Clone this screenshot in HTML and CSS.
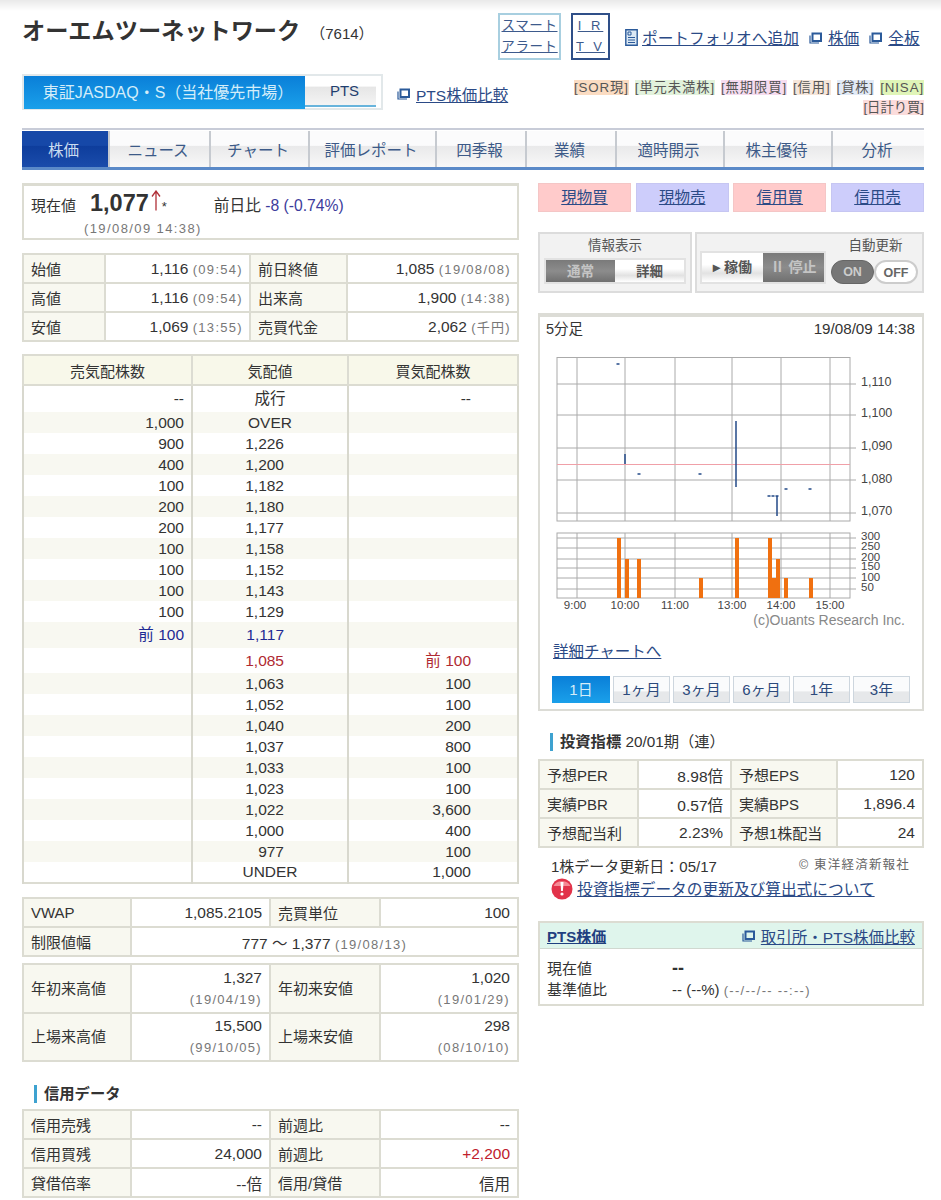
FILE: index.html
```html
<!DOCTYPE html>
<html lang="ja">
<head>
<meta charset="utf-8">
<title>オーエムツーネットワーク (7614)</title>
<link rel="stylesheet" href="styles.css">
</head>
<body>
<svg class="defs" width="0" height="0">
  <symbol id="win" viewBox="0 0 13 12"><path d="M3.500 1.500h8.500v7.500h-8.500z" fill="none" stroke="#2b5a9a" stroke-width="2"/><path d="M1 3.500v7.500h9" fill="none" stroke="#2b5a9a" stroke-width="1.200"/></symbol>
</svg>
<div class="page">
  <header class="head">
    <h1 class="title">オーエムツーネットワーク<span class="code">（7614）</span></h1>
    <div class="head-links">
      <div class="boxlink alert"><a href="#">スマート</a><a href="#">アラート</a></div>
      <div class="boxlink irtv"><a href="#">I R</a><a href="#">T V</a></div>
      <a class="toplink first" href="#"><svg class="docicon" viewBox="0 0 13 17"><path d="M.8.8h11.400v15.400H.8z" fill="#dbe8f4" stroke="#2b5a9a" stroke-width="1.400"/><path d="M3 3h3v3H3zM3 8.500h7M3 11h7M3 13.500h7" fill="none" stroke="#2b5a9a"/></svg><span>ポートフォリオへ追加</span></a>
      <a class="toplink" href="#"><svg class="winicon"><use href="#win"/></svg><span>株価</span></a>
      <a class="toplink" href="#"><svg class="winicon"><use href="#win"/></svg><span>全板</span></a>
    </div>
  </header>

  <div class="market">
    <div class="market-tabs">
      <div class="mtab on">東証JASDAQ・S（当社優先市場）</div>
      <div class="mtab pt">PTS</div>
    </div>
    <a class="ptslink" href="#"><svg class="winicon"><use href="#win"/></svg><span>PTS株価比較</span></a>
    <div class="tags">
      <span class="tag t1">[SOR現]</span><span class="tag t2">[単元未満株]</span><span class="tag t3">[無期限買]</span><span class="tag t4">[信用]</span><span class="tag t5">[貸株]</span><span class="tag t6">[NISA]</span><span class="tag t7">[日計り買]</span>
    </div>
  </div>

  <nav class="nav">
    <a class="on w86">株価</a><a class="w101">ニュース</a><a class="w99">チャート</a><a class="w127">評価レポート</a><a class="w90">四季報</a><a class="w90">業績</a><a class="w108">適時開示</a><a class="w108">株主優待</a><a class="grow">分析</a>
  </nav>

  <main class="cols">
    <section class="left">
      <div class="price">
        <div class="price-line">
          <span class="plabel">現在値</span><b class="pval">1,077</b><svg class="arrow" viewBox="0 0 10 21"><path d="M5 20.500V2M1 6.500L5 1l4 5.500" fill="none" stroke="#b03038" stroke-width="1.300"/></svg><span class="star">*</span>
          <span class="pdiff">前日比 <span class="blue">-8 (-0.74%)</span></span>
        </div>
        <div class="ptime">(19/08/09 14:38)</div>
      </div>

      <table class="tb stats">
        <colgroup><col class="c82"><col class="c145"><col class="c97"><col></colgroup>
        <tr><th>始値</th><td>1,116 <small>(09:54)</small></td><th>前日終値</th><td>1,085 <small>(19/08/08)</small></td></tr>
        <tr><th>高値</th><td>1,116 <small>(09:54)</small></td><th>出来高</th><td>1,900 <small>(14:38)</small></td></tr>
        <tr><th>安値</th><td>1,069 <small>(13:55)</small></td><th>売買代金</th><td>2,062 <small>(千円)</small></td></tr>
      </table>

      <table class="board">
        <colgroup><col class="c169"><col class="c156"><col></colgroup>
        <thead><tr><th>売気配株数</th><th>気配値</th><th>買気配株数</th></tr></thead>
        <tbody>
          <tr class="r27"><td class="s">--</td><td class="m">成行</td><td class="b">--</td></tr>
          <tr class="z"><td class="s">1,000</td><td class="m">OVER</td><td></td></tr>
          <tr><td class="s">900</td><td class="n">1,226</td><td></td></tr>
          <tr class="z"><td class="s">400</td><td class="n">1,200</td><td></td></tr>
          <tr><td class="s">100</td><td class="n">1,182</td><td></td></tr>
          <tr class="z"><td class="s">200</td><td class="n">1,180</td><td></td></tr>
          <tr><td class="s">200</td><td class="n">1,177</td><td></td></tr>
          <tr class="z"><td class="s">100</td><td class="n">1,158</td><td></td></tr>
          <tr><td class="s">100</td><td class="n">1,152</td><td></td></tr>
          <tr class="z"><td class="s">100</td><td class="n">1,143</td><td></td></tr>
          <tr><td class="s">100</td><td class="n">1,129</td><td></td></tr>
          <tr class="z r26 ask"><td class="s">前 100</td><td class="n">1,117</td><td></td></tr>
          <tr class="r25 bid"><td></td><td class="n">1,085</td><td class="b">前 100</td></tr>
          <tr class="z"><td></td><td class="n">1,063</td><td class="b">100</td></tr>
          <tr><td></td><td class="n">1,052</td><td class="b">100</td></tr>
          <tr class="z"><td></td><td class="n">1,040</td><td class="b">200</td></tr>
          <tr><td></td><td class="n">1,037</td><td class="b">800</td></tr>
          <tr class="z"><td></td><td class="n">1,033</td><td class="b">100</td></tr>
          <tr><td></td><td class="n">1,023</td><td class="b">100</td></tr>
          <tr class="z"><td></td><td class="n">1,022</td><td class="b">3,600</td></tr>
          <tr><td></td><td class="n">1,000</td><td class="b">400</td></tr>
          <tr class="z"><td></td><td class="n">977</td><td class="b">100</td></tr>
          <tr><td></td><td class="m">UNDER</td><td class="b">1,000</td></tr>
        </tbody>
      </table>

      <table class="tb vwap">
        <colgroup><col class="c108"><col class="c139"><col class="c110"><col></colgroup>
        <tr><th>VWAP</th><td>1,085.2105</td><th>売買単位</th><td>100</td></tr>
        <tr><th>制限値幅</th><td colspan="3" class="ctr">777 ～ 1,377 <small>(19/08/13)</small></td></tr>
      </table>

      <table class="tb tall">
        <colgroup><col class="c108"><col class="c139"><col class="c110"><col></colgroup>
        <tr><th>年初来高値</th><td>1,327<br><small>(19/04/19)</small></td><th>年初来安値</th><td>1,020<br><small>(19/01/29)</small></td></tr>
        <tr><th>上場来高値</th><td>15,500<br><small>(99/10/05)</small></td><th>上場来安値</th><td>298<br><small>(08/10/10)</small></td></tr>
      </table>

      <h2 class="sec sec-margin">信用データ</h2>
      <table class="tb">
        <colgroup><col class="c108"><col class="c139"><col class="c110"><col></colgroup>
        <tr><th>信用売残</th><td>--</td><th>前週比</th><td>--</td></tr>
        <tr><th>信用買残</th><td>24,000</td><th>前週比</th><td class="red">+2,200</td></tr>
        <tr><th>貸借倍率</th><td>--倍</td><th>信用/貸借</th><td>信用</td></tr>
      </table>
    </section>

    <aside class="right">
      <div class="trade">
        <a class="buy" href="#">現物買</a><a class="sell" href="#">現物売</a><a class="buy" href="#">信用買</a><a class="sell" href="#">信用売</a>
      </div>

      <div class="ctrl">
        <div class="cpanel info">
          <div class="clabel">情報表示</div>
          <div class="seg"><span class="dark">通常</span><span class="light">詳細</span></div>
        </div>
        <div class="cpanel auto">
          <div class="seg run"><span class="light">▸ 稼働</span><span class="dark">Ⅱ 停止</span></div>
          <div class="autoside">
            <div class="clabel">自動更新</div>
            <div class="pills"><span class="pill pon">ON</span><span class="pill poff">OFF</span></div>
          </div>
        </div>
      </div>

      <div class="chartbox">
        <div class="chart-head"><span>5分足</span><span class="chart-date">19/08/09 14:38</span></div>
        <svg class="chart" viewBox="540 340 382 300" width="382" height="300">
          <g class="grid">
            <rect x="557" y="356.500" width="293" height="163.500"/>
            <path d="M577 356V520M625 356V520M675 356V520M732 356V520M781 356V520M830 356V520M557 383H856M557 414H856M557 447H856M557 479H856M557 512H856"/>
            <rect x="557" y="532" width="293" height="65"/>
            <path d="M577 532V597M625 532V597M675 532V597M732 532V597M781 532V597M830 532V597M557 537H856M557 547H856M557 558H856M557 567H856M557 577H856M557 588H856"/>
          </g>
          <path class="prev" d="M557 463.500H850"/>
          <path class="tick" d="M616.500 363h3M625 453v10M637.500 473h3M698.500 473h3M736 420v66M767.500 495h3M771.500 495h3M775.500 495h3M777 495v20M784.500 488h3M808.500 488h3"/>
          <g class="vol">
            <rect x="617" y="537" width="4" height="60"/><rect x="625" y="558" width="4" height="39"/><rect x="637" y="558" width="4" height="39"/><rect x="699" y="577" width="4" height="20"/><rect x="735" y="537" width="4" height="60"/><rect x="768" y="537" width="4" height="60"/><rect x="772" y="577" width="4" height="20"/><rect x="776" y="558" width="4" height="39"/><rect x="784" y="577" width="4" height="20"/><rect x="809" y="577" width="4" height="20"/>
          </g>
          <g class="axis">
            <text x="861" y="385">1,110</text><text x="861" y="416">1,100</text><text x="861" y="449">1,090</text><text x="861" y="482">1,080</text><text x="861" y="514">1,070</text>
          </g>
          <g class="axis small">
            <text x="861" y="539">300</text><text x="861" y="549">250</text><text x="861" y="560">200</text><text x="861" y="569">150</text><text x="861" y="580">100</text><text x="861" y="590">50</text>
          </g>
          <g class="axis small mid">
            <text x="575" y="608">9:00</text><text x="625" y="608">10:00</text><text x="675" y="608">11:00</text><text x="732" y="608">13:00</text><text x="781" y="608">14:00</text><text x="830" y="608">15:00</text>
          </g>
          <text class="copy" x="905" y="624">(c)Ouants Research Inc.</text>
        </svg>
        <a class="chartlink" href="#">詳細チャートへ</a>
        <div class="periods"><a class="on">1日</a><a>1ヶ月</a><a>3ヶ月</a><a>6ヶ月</a><a>1年</a><a>3年</a></div>
      </div>

      <h2 class="sec sec-inv">投資指標 <span class="thin">20/01期（連）</span></h2>
      <table class="tb">
        <colgroup><col class="c99"><col class="c93"><col class="c106"><col></colgroup>
        <tr><th>予想PER</th><td>8.98倍</td><th>予想EPS</th><td>120</td></tr>
        <tr><th>実績PBR</th><td>0.57倍</td><th>実績BPS</th><td>1,896.4</td></tr>
        <tr><th>予想配当利</th><td>2.23%</td><th>予想1株配当</th><td>24</td></tr>
      </table>
      <div class="note"><span>1株データ更新日：05/17</span><span class="toyo">© 東洋経済新報社</span></div>
      <a class="notice" href="#"><svg class="warn" viewBox="0 0 22 22"><circle cx="11" cy="11" r="10.500" fill="#e2334a"/><path d="M2.500 8a9 7 0 0 1 17 0z" fill="#f58a95"/><path d="M9.500 4h3l-.6 9h-1.800z" fill="#fff"/><circle cx="11" cy="16" r="1.600" fill="#fff"/></svg><span>投資指標データの更新及び算出式について</span></a>

      <div class="pts">
        <div class="pts-head"><a class="pts-title" href="#">PTS株価</a><a class="ptscmp" href="#"><svg class="winicon"><use href="#win"/></svg><span>取引所・PTS株価比較</span></a></div>
        <div class="pts-body">
          <div class="pts-row"><span class="pts-l">現在値</span><b class="pts-v">--</b></div>
          <div class="pts-row"><span class="pts-l">基準値比</span><span>-- (--%) <small>(--/--/-- --:--)</small></span></div>
        </div>
      </div>
    </aside>
  </main>
</div>
</body>
</html>
```

FILE: styles.css
```css
* { box-sizing: border-box; }
html, body { margin: 0; padding: 0; background: #fff; }
body {
  font-family: "Liberation Sans", "Noto Sans CJK JP", sans-serif;
  font-size: 15px;
  color: #333;
  height: 1200px;
  overflow: hidden;
  background: linear-gradient(#e9e9e9, #fff 11px);
}
a { color: #2b4a86; text-decoration: underline; }
.defs { position: absolute; }
.page { padding: 13px 17px 0 22px; }

.head { display: flex; justify-content: space-between; height: 47px; }
.title { margin: 4px 0 0; font-size: 23.200px; line-height: 28px; font-weight: 700; color: #333; white-space: nowrap; }
.code { font-size: 15px; font-weight: 400; margin-left: 10px; }
.head-links { display: flex; align-items: center; flex: none; width: 426px; }
.boxlink { display: flex; flex-direction: column; align-items: center; justify-content: center; gap: 3px; height: 47px; border: 2px solid #a8cfe0; font-size: 13.500px; line-height: 18px; flex: none; }
.boxlink a { color: #3d5a8c; }
.alert { width: 63px; margin-right: 10px; letter-spacing: .6px; }
.irtv { width: 39px; border-color: #2f4f88; font-size: 13px; letter-spacing: 3px; }
.toplink { display: flex; align-items: center; flex: none; white-space: nowrap; font-size: 15.700px; margin-left: 10px; text-decoration: none; padding-top: 2px; }
.toplink.first { margin-left: 15px; }
.toplink span { text-decoration: underline; }
.docicon { width: 13px; height: 17px; margin-right: 4px; }
.winicon { width: 13px; height: 12px; margin-right: 6px; flex: none; }

.market { display: flex; align-items: flex-start; margin-top: 14px; height: 54px; }
.market-tabs { display: flex; width: 361px; height: 36px; border: 2px solid #e2e8ea; padding-right: 5px; flex: none; }
.mtab { flex: 1; height: 31px; margin-bottom: 1px; text-align: center; line-height: 30px; font-size: 15px; color: #1f3f6f; background: linear-gradient(#fff 35%, #e6e6e6 38%, #f4f4f4); border-bottom: 2px solid #68b4dc; }
.mtab.pt { padding-left: 8px; }
.mtab.on { flex: none; width: 281px; padding-left: 7px; font-size: 16px; line-height: 33px; color: #d4edf9; background: linear-gradient(#0a7fd8, #1aa0ea); border-bottom: 0; height: 33px; }
.ptslink { display: flex; align-items: center; font-size: 15.500px; margin: 9px 0 0 14px; text-decoration: none; width: 111px; white-space: nowrap; flex: none; }
.ptslink span { text-decoration: underline; }
.tags { display: flex; flex-wrap: wrap; justify-content: flex-end; gap: 5px 6px; width: 360px; margin: 6px 0 0 auto; font-size: 13.300px; line-height: 15px; }
.tag { color: #555; letter-spacing: .9px; white-space: nowrap; }
.t1 { background: #fbdcc2; } .t2 { background: #e2f2dc; } .t3 { background: #f6dcf0; }
.t4 { background: #f6e6da; } .t5 { background: #e2eaf6; } .t6 { background: #e0f5b8; }
.tag.t7 { background: #fbdcdc; letter-spacing: 0; }

.nav { display: flex; height: 42px; border-top: 2px solid #c8ccd8; border-bottom: 3px solid #5b8ac8; background: #fff; padding-top: 1px; }
.nav a { display: block; padding-right: 3px; text-align: center; line-height: 39px; font-size: 15.500px; color: #3c5a88; text-decoration: none; border-left: 2px solid #c6cad0; background: linear-gradient(#fbfbfc 40%, #e9e9ea 42%, #f8f8f8); }
.nav a.on { border-left: 0; color: #c9dcf0; background: linear-gradient(#1648a8 40%, #0e3d9c 42%, #1a4cab); }
.w86 { width: 86px; } .w101 { width: 101px; } .w99 { width: 99px; } .w127 { width: 127px; }
.w90 { width: 90px; } .w108 { width: 108px; } .grow { flex: 1; }

.cols { display: flex; justify-content: space-between; margin-top: 13px; }
.left { width: 497px; }
.right { width: 386px; }

.price { height: 57px; border: 2px solid #dcdcd2; border-top-width: 3px; padding: 4px 0 0 7px; }
.price-line { display: flex; align-items: baseline; height: 32px; }
.plabel { width: 59px; font-size: 15px; }
.pval { font-size: 23.500px; }
.arrow { width: 10px; height: 21px; margin: 0 0 -6px 2px; }
.star { font-size: 13px; width: 52px; margin-left: 1px; }
.pdiff { font-size: 15.700px; }
.blue { color: #3c3c9c; }
.ptime { margin-left: 53px; font-size: 13px; line-height: 14px; letter-spacing: 1.400px; color: #777; }

.tb { width: 100%; table-layout: fixed; border-collapse: collapse; font-size: 15px; }
.tb th, .tb td { height: 29px; padding: 0 7px; border: 2px solid #dcdcd2; font-weight: 400; white-space: nowrap; }
.tb th { text-align: left; background: #f8f8f0; }
.tb td { text-align: right; background: #fff; font-size: 15.500px; }
.tb td.ctr { text-align: center; }
.tb small, .pts small { font-size: 13px; letter-spacing: 1.300px; color: #777; }
.stats { margin-top: 13px; }
.stats td { padding-right: 6px; }
.vwap { margin-top: 13px; }
.tall { margin-top: 6px; }
.tall th, .tall td { height: 48.500px; line-height: 21px; }
.red { color: #c0202c; }
.c82 { width: 82px; } .c145 { width: 145px; } .c97 { width: 97px; }
.c108 { width: 108px; } .c139 { width: 139px; } .c110 { width: 110px; }
.c99 { width: 99px; } .c93 { width: 93px; } .c106 { width: 106px; }
.c169 { width: 169px; } .c156 { width: 156px; }

.board { width: 100%; margin-top: 12px; table-layout: fixed; border-collapse: collapse; font-size: 15.500px; border: 2px solid #dcdcd2; }
.board thead th { height: 30px; font-size: 15px; font-weight: 400; background: #f8f8ea; border: 2px solid #dcdcd2; }
.board td { height: 21px; padding: 0; line-height: 18px; border-left: 2px solid #d8d8ce; border-right: 2px solid #d8d8ce; }
.board .r27 td { height: 27px; }
.board .r26 td { height: 26px; }
.board .r25 td { height: 25px; }
.board .z td { background: #f8f8f1; }
.board .s { text-align: right; padding-right: 7px; }
.board .b { text-align: right; padding-right: 46px; }
.board .m { text-align: center; }
.board .n { text-align: right; padding-right: 63px; }
.ask td { color: #1f2a94; }
.bid td { color: #b02a32; }

.sec { margin: 0; padding-left: 7px; font-size: 15.300px; line-height: 18px; font-weight: 700; border-left: 3px solid #3ea2d0; }
.thin { font-weight: 400; }
.sec-margin { margin: 23px 0 6px 12px; }
.sec-inv { margin: 22px 0 8px 12px; }

.trade { display: flex; justify-content: space-between; height: 29px; }
.trade a { display: block; width: 93px; text-align: center; line-height: 28px; font-size: 15.500px; border-width: 1px; border-style: solid; }
.trade .buy { background: #ffcbcb; border-color: #f4c6c6; }
.trade .sell { background: #cdcdfb; border-color: #c6c6f2; }

.ctrl { display: flex; justify-content: space-between; margin-top: 20px; height: 61px; }
.cpanel { background: #f2f2f2; border: 2px solid #dcdcdc; }
.info { width: 154px; padding: 3px 4px; text-align: center; }
.auto { width: 229px; display: flex; padding: 0 2px 0 3px; align-items: flex-end; justify-content: space-between; }
.clabel { font-size: 13.500px; line-height: 18px; color: #555; text-align: center; }
.seg { display: flex; height: 26px; margin-top: 3px; border: 2px solid #e2e2e2; font-size: 13.500px; line-height: 23px; font-weight: 700; text-align: center; }
.seg span { flex: 1; }
.dark { background: linear-gradient(#7a7a7a, #8c8c8c 50%, #707070); color: #c4c4c4; }
.light { background: linear-gradient(#fff 40%, #e2e2e2 70%, #fff); color: #555; }
.run { width: 126px; height: 33px; line-height: 29px; margin: 0 0 7px; font-size: 14px; }
.autoside { width: 89px; padding-bottom: 7px; }
.pills { display: flex; margin-top: 5px; }
.pill { height: 24px; border-radius: 12px; text-align: center; font-size: 12.500px; line-height: 22px; font-weight: 700; }
.pon { width: 43px; background: #777; color: #ccc; border: 1px solid #666; }
.poff { width: 44px; background: #fff; color: #666; border: 2px solid #ccc; }

.chartbox { margin-top: 20px; height: 398px; border: 2px solid #dcdcd6; border-top-width: 4px; }
.chart-head { display: flex; justify-content: space-between; height: 24px; padding: 3px 7px 0 6px; font-size: 14.500px; line-height: 18px; }
.chart-date { font-size: 15.200px; }
.chart { display: block; }
.grid rect, .grid path { fill: none; stroke: #aaa; stroke-width: 1; }
.prev { stroke: #f0a0a8; stroke-width: 1; }
.tick { stroke: #234a88; stroke-width: 1.500; fill: none; }
.vol rect { fill: #f07010; }
.axis text { font-size: 12.500px; fill: #444; }
.axis.small text { font-size: 11.500px; }
.axis.mid text { text-anchor: middle; }
.copy { font-size: 14px; fill: #888; text-anchor: end; }
.chartlink { display: block; margin: 1px 0 0 13px; font-size: 15.500px; line-height: 20px; }
.periods { display: flex; gap: 3px; margin: 14px 0 0 12px; }
.periods a { width: 57px; height: 27px; text-align: center; line-height: 25px; font-size: 15px; color: #2c4a7c; text-decoration: none; border: 1px solid #cdd6de; background: linear-gradient(#fafbfc 55%, #e6e8ea 60%); }
.periods a.on { width: 58px; color: #d4edf9; border: 0; line-height: 27px; background: linear-gradient(#0a7fd8, #1aa0ea); }

.note { display: flex; justify-content: space-between; padding: 9px 14px 0 13px; font-size: 15px; line-height: 20px; }
.toyo { font-size: 12.500px; letter-spacing: 1.200px; color: #666; line-height: 16px; }
.notice { display: flex; align-items: center; margin: 0 0 0 13px; font-size: 15.700px; text-decoration: none; white-space: nowrap; }
.notice span { text-decoration: underline; }
.warn { width: 22px; height: 22px; margin-right: 4px; }

.pts { margin-top: 21px; height: 85px; border: 2px solid #dcdcd2; }
.pts-head { display: flex; justify-content: space-between; align-items: center; height: 26px; padding: 0 7px; background: #dff5ec; border-bottom: 1px solid #d0d8d0; }
.pts-title { font-weight: 700; color: #1f4080; font-size: 15px; }
.ptscmp { display: flex; align-items: center; font-size: 15.500px; text-decoration: none; }
.ptscmp span { text-decoration: underline; }
.pts-body { padding: 9px 7px 0; line-height: 21px; }
.pts-row { display: flex; align-items: baseline; }
.pts-l { width: 125px; }
.pts-v { font-size: 18px; }
```
